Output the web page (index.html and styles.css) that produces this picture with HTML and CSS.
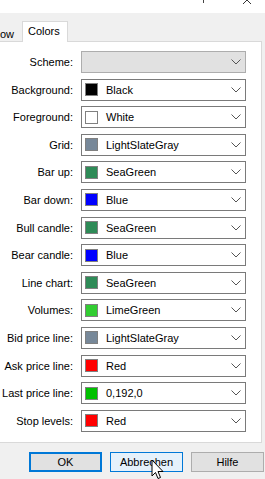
FILE: index.html
```html
<!DOCTYPE html>
<html lang="en">
<head>
  <meta charset="UTF-8" />
  <title>Colors</title>
  <link rel="stylesheet" href="styles.css">
</head>
<body>

  <div class="titlebar">
    <svg class="tb-icons" width="265" height="13" viewBox="0 0 265 13">
      <line x1="203.5" y1="0" x2="203.5" y2="3" stroke="#444" stroke-width="1"/>
      <line x1="243" y1="-4" x2="251" y2="4" stroke="#333" stroke-width="1"/>
      <line x1="251" y1="-4" x2="243" y2="4" stroke="#333" stroke-width="1"/>
    </svg>
  </div>

  <div class="tabs">
    <div class="tab">ow</div>
    <div class="tab active">Colors</div>
  </div>

  <div class="panel">
    <div class="form" id="form"></div>
  </div>

  <div class="buttons">
    <button class="btn default">OK</button>
    <button class="btn hover">Abbrechen</button>
    <button class="btn">Hilfe</button>
  </div>

  <svg class="cursor" width="14" height="22" viewBox="0 0 14 22">
    <path d="M1 1 L1 17 L4.5 13.5 L7 19.5 L9.5 18.5 L7 12.5 L12 12.5 Z" fill="#fff" stroke="#000" stroke-width="1" stroke-linejoin="miter"/>
  </svg>

  <script>
    const rows = [
      ["Scheme:", null, null],
      ["Background:", "#000000", "Black"],
      ["Foreground:", "#ffffff", "White"],
      ["Grid:", "#778899", "LightSlateGray"],
      ["Bar up:", "#2e8b57", "SeaGreen"],
      ["Bar down:", "#0000ff", "Blue"],
      ["Bull candle:", "#2e8b57", "SeaGreen"],
      ["Bear candle:", "#0000ff", "Blue"],
      ["Line chart:", "#2e8b57", "SeaGreen"],
      ["Volumes:", "#32cd32", "LimeGreen"],
      ["Bid price line:", "#778899", "LightSlateGray"],
      ["Ask price line:", "#ff0000", "Red"],
      ["Last price line:", "#00c000", "0,192,0"],
      ["Stop levels:", "#ff0000", "Red"]
    ];

    const chevron = '<svg class="chev" width="10" height="6" viewBox="0 0 10 6"><polyline points="0.5,0.5 5,5 9.5,0.5" fill="none" stroke="#555" stroke-width="1"/></svg>';

    const form = document.getElementById("form");
    rows.forEach(([label, color, name]) => {
      const lab = document.createElement("div");
      lab.className = "label";
      lab.textContent = label;
      form.appendChild(lab);

      const combo = document.createElement("div");
      combo.className = color ? "combo" : "combo disabled";
      if (color) {
        combo.innerHTML = `<span class="swatch" style="background:${color}"></span><span class="value">${name}</span>${chevron}`;
      } else {
        combo.innerHTML = `<span class="value"></span>${chevron}`;
      }
      form.appendChild(combo);
    });
  </script>
</body>
</html>
```

FILE: styles.css
```css
* {
  box-sizing: border-box;
}

body {
  margin: 0;
  width: 265px;
  height: 479px;
  overflow: hidden;
  background: #f0f0f0;
  font-family: 'Liberation Sans', Arial, sans-serif;
  font-size: 11px;
  color: #000;
  position: relative;
}

.titlebar {
  height: 13px;
  background: #fff;
}

.tb-icons {
  display: block;
}

.tabs {
  height: 28px;
  display: flex;
  align-items: flex-end;
  padding-left: 0;
}

.tab {
  height: 18px;
  padding: 5px 0 0 0;
  width: 22px;
  line-height: 12px;
}

.tab.active {
  width: 46px;
  height: 21px;
  padding: 3px 0 0 5px;
  background: #fff;
  border: 1px solid #d9d9d9;
  border-bottom: none;
  margin-bottom: -1px;
  position: relative;
  z-index: 1;
}

.panel {
  width: 262px;
  height: 402px;
  background: #fff;
  border: 1px solid #d9d9d9;
  border-left: none;
  padding-top: 9px;
}

.form {
  display: grid;
  grid-template-columns: 73px 165px;
  column-gap: 8px;
  row-gap: 5.6px;
}

.label {
  text-align: right;
  line-height: 22px;
  height: 22px;
  white-space: nowrap;
}

.combo {
  height: 22px;
  border: 1px solid #7a7a7a;
  background: #fff;
  display: flex;
  align-items: center;
  padding-left: 3px;
  padding-right: 4px;
}

.combo.disabled {
  background: #e1e1e1;
  border-color: #adadad;
}

.swatch {
  width: 13px;
  height: 13px;
  border: 1px solid #808080;
  flex: none;
}

.value {
  flex: 1;
  margin-left: 8px;
  white-space: nowrap;
}

.chev {
  flex: none;
}

.buttons {
  display: flex;
  gap: 8px;
  padding: 9px 0 0 29px;
}

.btn {
  width: 73px;
  height: 20px;
  flex: none;
  font-family: 'Liberation Sans', Arial, sans-serif;
  font-size: 11px;
  color: #000;
  background: #e1e1e1;
  border: 1px solid #adadad;
  padding: 0;
}

.btn.default {
  border: 2px solid #0078d7;
}

.btn.hover {
  background: #e5f1fb;
  border-color: #0078d7;
}

.cursor {
  position: absolute;
  left: 151px;
  top: 459px;
}
```
